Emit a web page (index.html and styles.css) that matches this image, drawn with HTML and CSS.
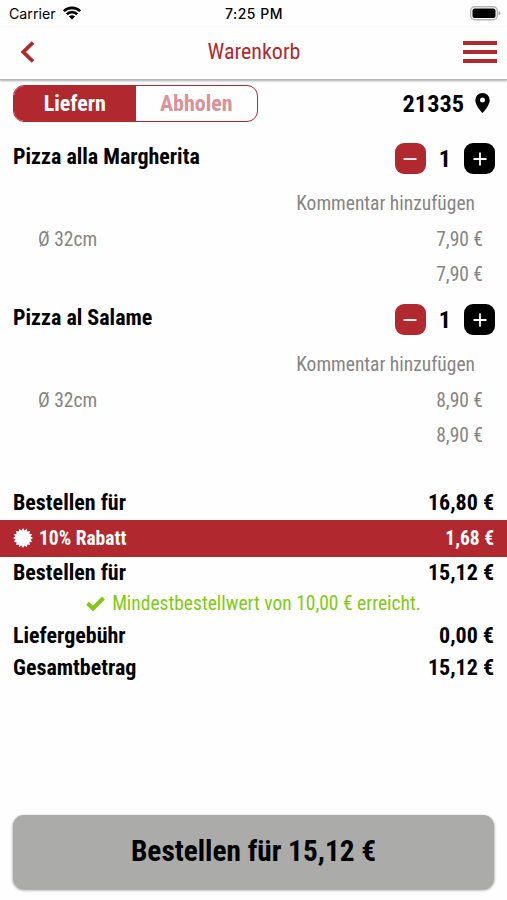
FILE: index.html
```html
<!DOCTYPE html>
<html lang="de">
<head>
<meta charset="utf-8">
<title>Warenkorb</title>
<link rel="stylesheet" href="styles.css">
</head>
<body>
<div class="status">
  <div class="carrier"><span>Carrier</span>
    <svg width="18" height="14" viewBox="0 0 18 14"><g fill="none" stroke="#000" stroke-width="2.6"><path d="M.8 5.2C5.3.7 12.700.7 17.200 5.200"/><path d="M3.700 8.300C6.700 5.400 11.300 5.400 14.300 8.300"/></g><path d="M9 13.600L5.900 10.500C7.700 8.900 10.300 8.900 12.100 10.500Z"/></svg>
  </div>
  <span class="time">7:25 PM</span>
  <svg class="battery" width="31" height="15" viewBox="0 0 31 15"><rect x=".7" y=".7" width="26.600" height="13" rx="4" fill="#fff" stroke="#b5b5b5" stroke-width="1.400"/><rect x="2.500" y="2.500" width="23" height="9.500" rx="2"/><path d="M28.500 5q2 1 2 2.300t-2 2.300z" fill="#aaa"/></svg>
</div>
<header class="header">
  <svg class="back" width="16" height="22" viewBox="0 0 16 22"><path d="M14 1.500L4.300 11L14 20.500" fill="none" stroke="#b2282f" stroke-width="3.800"/></svg>
  <h1 class="title">Warenkorb</h1>
  <div class="menu"><i></i><i></i><i></i></div>
</header>
<div class="mode">
  <div class="toggle"><b class="on">Liefern</b><b class="off">Abholen</b></div>
  <div class="zip"><b>21335</b><svg width="15" height="20" viewBox="0 0 15 20"><path fill-rule="evenodd" d="M7.500 0A7.200 7.200 0 0 0 .3 7.200C.3 12.500 7.500 20 7.500 20S14.700 12.500 14.700 7.200A7.200 7.200 0 0 0 7.500 0ZM7.500 4.600A2.500 2.500 0 1 1 7.500 9.600A2.500 2.500 0 0 1 7.500 4.600Z"/></svg></div>
</div>
<section class="item">
  <div class="head"><b class="name">Pizza alla Margherita</b>
    <div class="qty"><span class="btn minus"><svg width="14" height="14" viewBox="0 0 14 14"><path d="M.5 7H13.500"/></svg></span><b>1</b><span class="btn plus"><svg width="14" height="14" viewBox="0 0 14 14"><path d="M.5 7H13.500M7 .5V13.500"/></svg></span></div></div>
  <div class="line comment"><span>Kommentar hinzufügen</span></div>
  <div class="line"><span>Ø 32cm</span><span>7,90 €</span></div>
  <div class="line sum"><span>7,90 €</span></div>
</section>
<section class="item">
  <div class="head"><b class="name">Pizza al Salame</b>
    <div class="qty"><span class="btn minus"><svg width="14" height="14" viewBox="0 0 14 14"><path d="M.5 7H13.500"/></svg></span><b>1</b><span class="btn plus"><svg width="14" height="14" viewBox="0 0 14 14"><path d="M.5 7H13.500M7 .5V13.500"/></svg></span></div></div>
  <div class="line comment"><span>Kommentar hinzufügen</span></div>
  <div class="line"><span>Ø 32cm</span><span>8,90 €</span></div>
  <div class="line sum"><span>8,90 €</span></div>
</section>
<section class="totals">
  <div class="row"><b>Bestellen für</b><b>16,80 €</b></div>
  <div class="row discount"><span class="label"><svg width="20" height="20" viewBox="-10 -10 20 20"><path id="seal" fill="#fff"/></svg><b>10% Rabatt</b></span><b>1,68 €</b></div>
  <div class="row after"><b>Bestellen für</b><b>15,12 €</b></div>
  <div class="reached"><svg width="19" height="15" viewBox="0 0 19 15"><path d="M1.500 7.300L7 12.500L17.500 2" fill="none" stroke="#80cb12" stroke-width="4"/></svg><span>Mindestbestellwert von 10,00 € erreicht.</span></div>
  <div class="row fee"><b>Liefergebühr</b><b>0,00 €</b></div>
  <div class="row"><b>Gesamtbetrag</b><b>15,12 €</b></div>
</section>
<button class="order">Bestellen für 15,12 €</button>
<script src="seal.js"></script>
</body>
</html>
```
FILE: styles.css
```css
* { box-sizing: border-box; }
body { margin: 0; width: 507px; height: 900px; overflow: hidden; display: flex; flex-direction: column; background: #fefefe; color: #000; font-family: "Roboto Condensed", Roboto, sans-serif; font-stretch: 75%; font-size: 22px; }
svg { display: block; flex: none; }
.status { height: 27px; display: grid; grid-template-columns: 1fr auto 1fr; align-items: center; padding: 0 6px 0 9px; font: 14.2px/27px Inter, sans-serif; }
.carrier { display: flex; align-items: center; gap: 7px; }
.carrier svg { margin-top: -2px; }
.time { font-weight: 500; font-size: 14px; letter-spacing: .5px; margin-left: -2px; }
.battery { justify-self: end; }
.header { height: 53px; display: grid; grid-template-columns: 1fr auto 1fr; align-items: center; padding: 0 10px 3px 19px; border-bottom: 1px solid #b4b4b4; box-shadow: 0 1px 2px #aaa; }
.title { margin: 0 8px 0 0; font-size: 22px; font-weight: 400; color: #b2282f; }
.menu { justify-self: end; width: 34px; display: grid; gap: 5px; }
.menu i { height: 4px; background: #b2282f; }
.mode { height: 47px; padding: 5px 17px 5px 13px; display: flex; justify-content: space-between; }
.toggle { width: 245px; height: 37px; display: grid; grid-template-columns: 1fr 1fr; border: 1px solid #b2282f; border-radius: 11px; overflow: hidden; text-align: center; line-height: 35px; }
.on { background: #b2282f; color: #fff; }
.off { color: #d99297; }
.zip { display: flex; align-items: center; gap: 11px; font-size: 24.300px; height: 36px; }
.item { height: 161px; padding: 0 12px 0 13px; }
.head { height: 59px; padding-top: 16px; display: flex; justify-content: space-between; align-items: flex-start; }
.name { line-height: 28px; }
.qty { height: 31px; display: flex; align-items: center; gap: 13px; font-size: 24px; line-height: 33px; }
.qty b { padding-top: 2px; }
.btn { width: 31px; height: 31px; border-radius: 9px; display: grid; place-items: center; background: #000; }
.minus { background: #b2282f; }
.btn path { stroke: #fff; stroke-width: 1.8; fill: none; }
.line { height: 35.500px; display: flex; justify-content: space-between; align-items: center; padding: 0 12px 0 25px; font-size: 19.500px; color: #858585; }
.comment, .sum { justify-content: flex-end; }
.comment { padding-right: 20px; }
.totals { padding-top: 37px; }
.row { height: 33px; padding: 0 13px; display: flex; justify-content: space-between; align-items: center; font-size: 22px; }
.discount { height: 37px; background: #b2282f; color: #fff; font-size: 19.500px; margin-top: 1px; }
.discount svg { margin-top: -2px; }
.label { display: flex; align-items: center; gap: 6px; }
.after { height: 31px; }
.reached { height: 31px; display: flex; align-items: center; justify-content: center; gap: 7px; color: #80cb12; font-size: 19.500px; }
.fee { height: 32px; }
.order { margin: auto 13px 11px; padding: 0 0 3px; height: 74px; flex: none; border: 0; border-radius: 11px; background: #ababa9; color: #000; font: 700 29.300px "Roboto Condensed", Roboto, sans-serif; font-stretch: 75%; box-shadow: 0 1px 3px #888; }
```
FILE: seal.js
```js
// Scalloped discount seal with sixteen points
const points = Array.from({ length: 32 }, (_, i) => {
  const radius = i % 2 ? 7.7 : 10;
  const angle = (i * Math.PI) / 16;
  return `${(radius * Math.cos(angle)).toFixed(2)} ${(radius * Math.sin(angle)).toFixed(2)}`;
});
document.getElementById("seal").setAttribute("d", `M${points.join("L")}Z`);
```
